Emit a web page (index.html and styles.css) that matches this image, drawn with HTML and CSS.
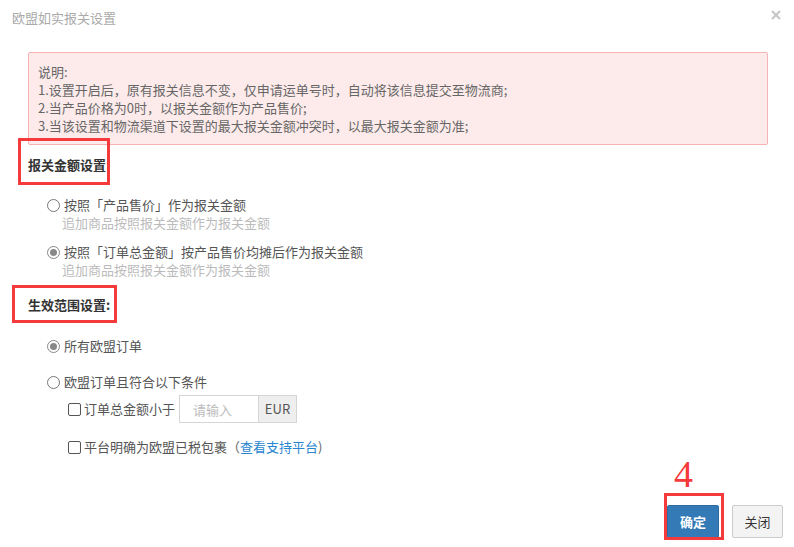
FILE: index.html
```html
<!DOCTYPE html>
<html lang="zh-CN">
<head>
  <meta charset="UTF-8">
  <title>欧盟如实报关设置</title>
  <link rel="stylesheet" href="styles.css">
</head>
<body>
  <div class="modal">
    <div class="modal-header">
      <span class="modal-title">欧盟如实报关设置</span>
      <span class="close">
        <svg width="10" height="10" viewBox="0 0 10 10"><path d="M1 1L9 9M9 1L1 9" stroke="#c4c4c4" stroke-width="2"/></svg>
      </span>
    </div>

    <div class="alert">
      <div>说明:</div>
      <div>1.设置开启后，原有报关信息不变，仅申请运单号时，自动将该信息提交至物流商;</div>
      <div>2.当产品价格为0时，以报关金额作为产品售价;</div>
      <div>3.当该设置和物流渠道下设置的最大报关金额冲突时，以最大报关金额为准;</div>
    </div>

    <div class="section-title first">
      报关金额设置:
      <span class="mark mark-one"></span>
    </div>
    <div class="option first-option">
      <span class="radio"></span>按照「产品售价」作为报关金额
    </div>
    <div class="hint">追加商品按照报关金额作为报关金额</div>
    <div class="option next-option">
      <span class="radio checked"></span>按照「订单总金额」按产品售价均摊后作为报关金额
    </div>
    <div class="hint">追加商品按照报关金额作为报关金额</div>

    <div class="section-title second">
      生效范围设置:
      <span class="mark mark-two"></span>
    </div>
    <div class="option scope-all">
      <span class="radio checked"></span>所有欧盟订单
    </div>
    <div class="option scope-cond">
      <span class="radio"></span>欧盟订单且符合以下条件
    </div>
    <div class="check-row amount-row">
      <span class="checkbox"></span>订单总金额小于
      <div class="input-group">
        <input type="text" placeholder="请输入">
        <span class="addon">EUR</span>
      </div>
    </div>
    <div class="check-row platform-row">
      <span class="checkbox"></span>平台明确为欧盟已税包裹<span class="paren">（</span><a href="#">查看支持平台</a><span class="paren">)</span>
    </div>

    <div class="modal-footer">
      <div class="btn-wrap">
        <span class="step">4</span>
        <span class="mark mark-btn"></span>
        <button class="btn btn-primary">确定</button>
      </div>
      <button class="btn btn-default">关闭</button>
    </div>
  </div>
</body>
</html>
```

FILE: styles.css
```css
html, body {
  margin: 0;
  padding: 0;
  background-color: #fff;
  color: #555;
  font-family: "Noto Sans CJK SC", "Microsoft YaHei", sans-serif;
  font-size: 13px;
  line-height: 18px;
}

.modal {
  width: 794px;
  height: 547px;
  overflow: hidden;
}

.modal-header {
  display: flex;
  justify-content: space-between;
  align-items: center;
  height: 18px;
  padding: 9px 12px 0 12px;
}

.modal-title {
  color: #aaa;
}

.close {
  display: flex;
  margin-right: 1px;
  margin-top: -6px;
}

.alert {
  margin: 25px 26px 0 28px;
  padding: 10px 9px 9px 9px;
  background-color: #fdebeb;
  border: 1px solid #f5b3b3;
  border-radius: 2px;
  color: #666;
}

.section-title {
  position: relative;
  display: inline-block;
  margin-left: 28px;
  color: #333;
  font-weight: bold;
}

.section-title.first {
  margin-top: 11px;
}

.section-title.second {
  margin-top: 18px;
}

.mark {
  position: absolute;
  border: 3px solid #f43a3a;
  pointer-events: none;
}

.mark-one {
  left: -10px;
  top: -18px;
  width: 86px;
  height: 41px;
}

.mark-two {
  left: -16px;
  top: -11px;
  width: 99px;
  height: 32px;
}

.option {
  display: flex;
  align-items: center;
  padding-left: 47px;
}

.first-option {
  margin-top: 22px;
}

.next-option {
  margin-top: 12px;
}

.scope-all {
  margin-top: 23px;
}

.scope-cond {
  margin-top: 18px;
}

.hint {
  padding-left: 62px;
  line-height: 17px;
  color: #bbb;
}

.radio {
  width: 11px;
  height: 11px;
  border: 1px solid #777;
  border-radius: 50%;
  margin-right: 4px;
  position: relative;
}

.radio.checked {
  border-color: #888;
}

.radio.checked::after {
  content: "";
  position: absolute;
  left: 2px;
  top: 2px;
  width: 7px;
  height: 7px;
  border-radius: 50%;
  background-color: #888;
}

.check-row {
  display: flex;
  align-items: center;
  padding-left: 68px;
}

.amount-row {
  margin-top: 4px;
  height: 28px;
}

.platform-row {
  margin-top: 15px;
}

.checkbox {
  width: 11px;
  height: 11px;
  border: 1px solid #555;
  border-radius: 2px;
  margin-right: 3px;
}

.input-group {
  display: flex;
  margin-left: 4px;
  height: 28px;
}

.input-group input {
  width: 79px;
  height: 28px;
  box-sizing: border-box;
  border: 1px solid #d5d5d5;
  border-right: 0;
  padding: 0 0 0 13px;
  font-family: inherit;
  font-size: 13px;
  color: #555;
  outline: none;
}

.input-group input::placeholder {
  color: #bbb;
}

.addon {
  width: 39px;
  box-sizing: border-box;
  display: flex;
  align-items: center;
  justify-content: center;
  background-color: #eee;
  border: 1px solid #d5d5d5;
  color: #555;
}

.paren {
  color: #666;
}

a {
  color: #2b86d0;
  text-decoration: none;
}

.modal-footer {
  display: flex;
  justify-content: flex-end;
  gap: 13px;
  margin-top: 49px;
  padding-right: 11px;
}

.btn-wrap {
  position: relative;
  display: flex;
}

.btn {
  height: 33px;
  padding: 0;
  white-space: nowrap;
  font-family: inherit;
  font-size: 13px;
  border-radius: 2px;
  cursor: pointer;
}

.btn-primary {
  width: 52px;
  background-color: #337ab7;
  border: 1px solid #2e6da4;
  color: #fff;
  font-weight: bold;
}

.btn-default {
  width: 51px;
  background-color: #f3f3f3;
  border: 1px solid #ccc;
  color: #333;
}

.mark-btn {
  left: -3px;
  top: -12px;
  width: 54px;
  height: 41px;
}

.step {
  position: absolute;
  left: 7px;
  top: -50px;
  font-family: "Liberation Serif", serif;
  font-size: 38px;
  line-height: 38px;
  color: #f43a3a;
}
```
